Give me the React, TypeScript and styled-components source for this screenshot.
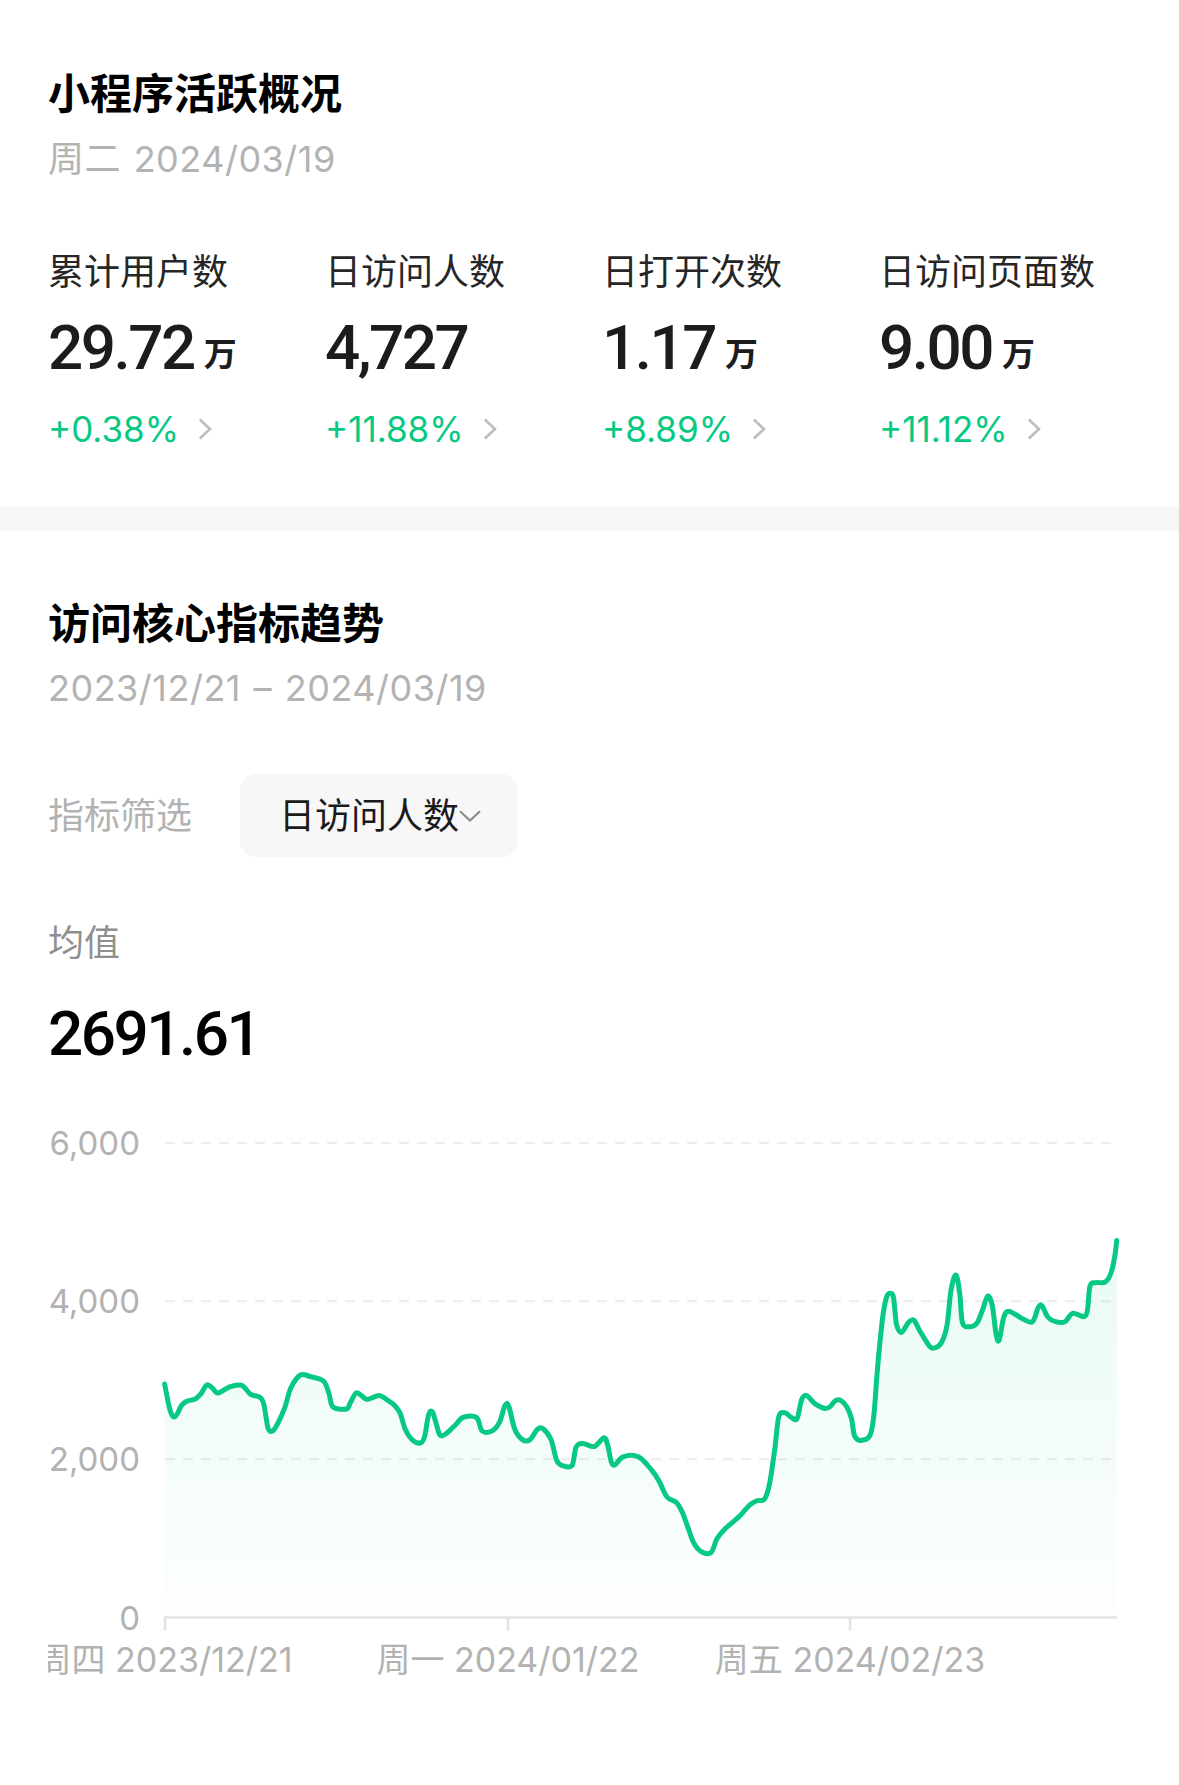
import * as React from "react";
import styled, { createGlobalStyle } from "styled-components";

const GREEN = "#07c983";

const GlobalStyle = createGlobalStyle`
  html, body {
    margin: 0;
    padding: 0;
    background: #ffffff;
  }
  body {
    font-family: Inter, "Noto Sans CJK SC", sans-serif;
    color: #111111;
    -webkit-font-smoothing: antialiased;
  }
`;

const Page = styled.div`
  width: 1179px;
  background: #ffffff;
`;

const Section = styled.section<{ $top: number; $bottom: number }>`
  padding: ${(p) => p.$top}px 48px ${(p) => p.$bottom}px 48px;
`;

const Title = styled.h2`
  margin: 0;
  font-size: 42px;
  line-height: 58px;
  font-weight: 600;
  color: #000000;
`;

const Subtitle = styled.div<{ $gap?: number }>`
  margin-top: ${(p) => p.$gap ?? 11}px;
  font-size: 36px;
  line-height: 50px;
  letter-spacing: 0.5px;
  word-spacing: 2px;
  color: #b3b3b3;
`;

const MetricGrid = styled.div`
  display: grid;
  grid-template-columns: repeat(4, 277px);
  margin-top: 63px;
`;

const Metric = styled.div`
  display: flex;
  flex-direction: column;
`;

const MetricLabel = styled.div`
  font-size: 36px;
  line-height: 50px;
  color: #262626;
`;

const MetricValue = styled.div`
  margin-top: 16px;
  height: 70px;
  font-family: Roboto, "Noto Sans CJK SC", sans-serif;
  font-size: 62px;
  line-height: 70px;
  font-weight: 500;
  letter-spacing: -2.5px;
  color: #1c1c1c;
  white-space: nowrap;
`;

const Unit = styled.span`
  margin-left: 10px;
  font-family: "Noto Sans CJK SC", sans-serif;
  font-size: 33px;
  line-height: 1;
  font-weight: 600;
  letter-spacing: 0;
  vertical-align: 3px;
`;

const ChangeRow = styled.div`
  display: flex;
  align-items: center;
  gap: 19px;
  margin-top: 24px;
  height: 44px;
`;

const Change = styled.span`
  font-size: 35px;
  line-height: 44px;
  color: ${GREEN};
`;

const Divider = styled.div`
  height: 24px;
  background: #f6f6f6;
`;

const FilterRow = styled.div`
  display: flex;
  align-items: center;
  margin-top: 61px;
`;

const FilterLabel = styled.span`
  font-size: 36px;
  line-height: 50px;
  color: #b2b2b2;
`;

const Select = styled.div`
  display: flex;
  align-items: center;
  box-sizing: border-box;
  width: 278px;
  height: 83px;
  margin-left: 48px;
  padding-left: 39px;
  border-radius: 16px;
  background: #f7f7f7;
  font-size: 36px;
  color: #1a1a1a;
`;

const SelectText = styled.span`
  line-height: 50px;
`;

const AvgLabel = styled.div`
  margin-top: 61px;
  font-size: 36px;
  line-height: 50px;
  color: #8f8f8f;
`;

const AvgValue = styled.div`
  margin-top: 31px;
  font-family: Roboto, sans-serif;
  font-size: 62px;
  line-height: 70px;
  font-weight: 500;
  letter-spacing: -2.5px;
  color: #000000;
`;

const ChartSvg = styled.svg`
  display: block;
`;

const AxisText = styled.text<{ $size?: number }>`
  font-family: Inter, "Noto Sans CJK SC", sans-serif;
  font-size: ${(p) => p.$size ?? 33}px;
  fill: #b2b2b2;
`;

const ChevronRight = () => (
  <svg width="14" height="22" viewBox="0 0 14 22">
    <path d="M1.8 1.5 L12 11 L1.8 20.5" fill="none" stroke="#bdbdbd" strokeWidth="2.6" />
  </svg>
);

const ChevronDown = () => (
  <svg width="22" height="12" viewBox="0 0 22 12">
    <path d="M1 1.2 L11 10.6 L21 1.2" fill="none" stroke="#8a8a8a" strokeWidth="2" />
  </svg>
);

const metrics = [
  { label: "累计用户数", value: "29.72", unit: "万", change: "+0.38%" },
  { label: "日访问人数", value: "4,727", unit: "", change: "+11.88%" },
  { label: "日打开次数", value: "1.17", unit: "万", change: "+8.89%" },
  { label: "日访问页面数", value: "9.00", unit: "万", change: "+11.12%" }
];

// traced from the trend, in page pixel coordinates
const points: [number, number][] = [
  [164.6, 1385], [170.3, 1412], [175.3, 1417.6], [181.8, 1406], [187.5, 1402], [195.2, 1400],
  [201, 1394.7], [206.7, 1386], [212.4, 1389], [218, 1394], [229.6, 1387.8], [240.3, 1386],
  [245, 1389], [250.7, 1395.4], [260.2, 1398.5], [264, 1406], [268, 1429], [272.5, 1432],
  [277.5, 1425], [285, 1408], [290.8, 1389], [300.4, 1376], [310, 1377.5], [323.4, 1382],
  [329, 1394.7], [333, 1408], [346.3, 1410], [350.2, 1404], [356, 1394], [361.6, 1396.6],
  [367.4, 1400.4], [378.9, 1396.6], [386.5, 1400.4], [394.2, 1406], [400, 1414], [405.6, 1431],
  [413.3, 1441.7], [421, 1443.7], [424.8, 1436.8], [428.6, 1415.7], [432.4, 1413], [436.3, 1425],
  [440, 1436], [445.8, 1434.9], [455.4, 1426], [463, 1418.4], [476.4, 1418.4], [482.2, 1432],
  [491.8, 1432], [499.4, 1423.4], [505.2, 1406], [509, 1408], [514.7, 1430], [522.4, 1440.6],
  [530, 1440.6], [537.7, 1430], [543.4, 1430], [551, 1440.6], [556.8, 1461.6], [562.6, 1466.6],
  [572, 1466.6], [576, 1448.3], [582.8, 1444.4], [594.3, 1447.5], [603.9, 1438.7], [607.7, 1446.3],
  [611.5, 1463.6], [615.4, 1465.5], [623, 1457.8], [638.3, 1457.8], [651.7, 1471.2], [659.4, 1482.7],
  [667, 1498], [676.6, 1503.7], [682.3, 1513.3], [688, 1528.6], [693.8, 1544], [701.5, 1552.7],
  [711, 1553.5], [716.8, 1540], [724.4, 1530.5], [739.7, 1517], [749.3, 1506.4], [757, 1501.8],
  [764.6, 1500], [769.6, 1484.6], [775, 1448.3], [778.8, 1417.6], [784.9, 1413.8], [791.4, 1418.4],
  [797.1, 1419.5], [801.7, 1400.4], [806.7, 1396.6], [814.4, 1404.2], [824, 1409.2], [829.7, 1408],
  [835.4, 1401.6], [841.1, 1401.6], [846.9, 1408], [851.5, 1419.5], [854.5, 1436.8], [860.3, 1441.4],
  [869.8, 1436.8], [873.7, 1417.6], [876.7, 1379.4], [879.4, 1348.8], [883.2, 1314.3], [887, 1297],
  [890.9, 1294.4], [893.6, 1299], [896.6, 1325.8], [901.6, 1333.4], [908.1, 1323.9], [913.9, 1321.2],
  [919.6, 1331.5], [929.2, 1346.8], [934.9, 1348.8], [941.8, 1343], [947.1, 1325.8], [951, 1291.3],
  [956, 1276], [959.8, 1295.2], [962.5, 1323.9], [969.4, 1327.7], [977, 1323.9], [982.7, 1310.5],
  [987.7, 1297], [992.3, 1306.7], [996.1, 1335.3], [999.2, 1341.1], [1003.8, 1318.1], [1009.5, 1312.4],
  [1022.9, 1320], [1032.5, 1322.7], [1038.2, 1308.6], [1042, 1306.7], [1047.8, 1318], [1055.5, 1322.7],
  [1065, 1322.7], [1072.7, 1314.3], [1086, 1316.2], [1089.9, 1287.5], [1095.6, 1283.7], [1105.2, 1283],
  [1111, 1274], [1114.8, 1257], [1116.7, 1241.6]
];

function smoothPath(pts: [number, number][]): string {
  let d = `M${pts[0][0]},${pts[0][1]}`;
  for (let i = 0; i < pts.length - 1; i++) {
    const p0 = pts[i - 1] || pts[i];
    const p1 = pts[i];
    const p2 = pts[i + 1];
    const p3 = pts[i + 2] || p2;
    const c1x = p1[0] + (p2[0] - p0[0]) / 6;
    const c1y = p1[1] + (p2[1] - p0[1]) / 6;
    const c2x = p2[0] - (p3[0] - p1[0]) / 6;
    const c2y = p2[1] - (p3[1] - p1[1]) / 6;
    d += ` C${c1x.toFixed(1)},${c1y.toFixed(1)} ${c2x.toFixed(1)},${c2y.toFixed(1)} ${p2[0]},${p2[1]}`;
  }
  return d;
}

const X0 = 165;
const X1 = 1117;
const AXIS_Y = 1618.5;
const yFor = (v: number) => AXIS_Y - (v / 6000) * 474.5;

// the viewBox is in page pixels, so the traced points can be used as they are
const TrendChart = () => {
  const line = smoothPath(points);
  const last = points[points.length - 1];
  const area = `${line} L${last[0]},${AXIS_Y} L${points[0][0]},${AXIS_Y} Z`;
  const ticks = [
    { x: 165, label: "周四 2023/12/21" },
    { x: 508, label: "周一 2024/01/22" },
    { x: 850, label: "周五 2024/02/23" }
  ];

  return (
    <ChartSvg width="1083" height="630" viewBox="48 1070 1083 630">
      <defs>
        <linearGradient id="trendFill" x1="0" y1="0" x2="0" y2="1">
          <stop offset="0%" stopColor={GREEN} stopOpacity="0.09" />
          <stop offset="100%" stopColor={GREEN} stopOpacity="0.01" />
        </linearGradient>
      </defs>

      {[6000, 4000, 2000].map((v) => (
        <line
          key={v}
          x1={X0}
          x2={X1}
          y1={yFor(v)}
          y2={yFor(v)}
          stroke="#ececec"
          strokeWidth="2"
          strokeDasharray="10 8"
        />
      ))}

      {[6000, 4000, 2000, 0].map((v) => (
        <AxisText key={v} x="140" y={yFor(v) + 12} textAnchor="end">
          {v.toLocaleString("en-US")}
        </AxisText>
      ))}

      <path d={area} fill="url(#trendFill)" />
      <path d={line} fill="none" stroke={GREEN} strokeWidth="5" strokeLinejoin="round" strokeLinecap="round" />

      <line x1={X0 - 1} x2={X1} y1={AXIS_Y} y2={AXIS_Y} stroke="#e3e3e3" strokeWidth="2.5" />
      {ticks.map((t) => (
        <g key={t.x}>
          <line x1={t.x} x2={t.x} y1={AXIS_Y} y2={AXIS_Y + 13} stroke="#e3e3e3" strokeWidth="2.5" />
          <AxisText x={t.x} y="1673" textAnchor="middle" $size={34}>
            {t.label}
          </AxisText>
        </g>
      ))}
    </ChartSvg>
  );
};

export default function App() {
  return (
    <Page>
      <GlobalStyle />
      <Section $top={65} $bottom={56}>
        <Title>小程序活跃概况</Title>
        <Subtitle>周二 2024/03/19</Subtitle>
        <MetricGrid>
          {metrics.map((m) => (
            <Metric key={m.label}>
              <MetricLabel>{m.label}</MetricLabel>
              <MetricValue>
                {m.value}
                {m.unit && <Unit>{m.unit}</Unit>}
              </MetricValue>
              <ChangeRow>
                <Change>{m.change}</Change>
                <ChevronRight />
              </ChangeRow>
            </Metric>
          ))}
        </MetricGrid>
      </Section>

      <Divider />

      <Section $top={64} $bottom={85}>
        <Title>访问核心指标趋势</Title>
        <Subtitle $gap={10}>2023/12/21 – 2024/03/19</Subtitle>
        <FilterRow>
          <FilterLabel>指标筛选</FilterLabel>
          <Select>
            <SelectText>日访问人数</SelectText>
            <ChevronDown />
          </Select>
        </FilterRow>
        <AvgLabel>均值</AvgLabel>
        <AvgValue>2691.61</AvgValue>
        <TrendChart />
      </Section>
    </Page>
  );
}
